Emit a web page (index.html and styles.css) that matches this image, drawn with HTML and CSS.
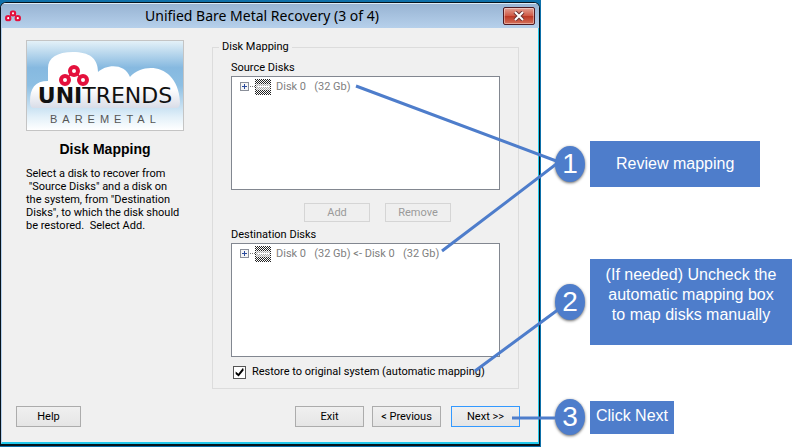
FILE: index.html
```html
<!DOCTYPE html>
<html lang="en">
<head>
    <meta charset="UTF-8">
    <meta name="viewport" content="width=device-width, initial-scale=1.0">
    <title>Unified Bare Metal Recovery</title>
    <link rel="stylesheet" href="styles.css">
</head>
<body>

    <!-- shared shapes -->
    <svg class="defs" width="0" height="0" aria-hidden="true">
        <defs>
            <symbol id="rings" viewBox="0 0 30 22">
                <g fill="#fff" stroke="#e4103c" stroke-width="4">
                    <circle cx="6" cy="15" r="4"/>
                    <circle cx="24" cy="15" r="4"/>
                    <circle cx="15" cy="6" r="4"/>
                </g>
                <path d="M10 11l2-2M18 9l2 2" stroke="#e4103c" stroke-width="2"/>
            </symbol>
            <pattern id="dither" width="2" height="2" patternUnits="userSpaceOnUse">
                <path d="M0 0h1v1H0zM1 1h1v1H1z" fill="#222"/>
            </pattern>
            <pattern id="dither-light" width="2" height="2" patternUnits="userSpaceOnUse">
                <path d="M0 0h1v1H0zM1 1h1v1H1z" fill="#aaa"/>
            </pattern>
            <symbol id="disk" viewBox="0 0 32 16">
                <g shape-rendering="crispEdges">
                    <rect x="1" y="3" width="8" height="8" fill="#f4f4f4" stroke="none"/>
                    <path d="M1 3h9v1H1zM1 11h9v1H1zM1 3h1v9H1zM9 3h1v9H9z" fill="#8a8f99"/>
                    <path d="M3 7h5v1H3zM5 5h1v5H5z" fill="#2a4a9c"/>
                    <path d="M11 7h1v1h-1zM13 7h1v1h-1zM15 7h1v1h-1z" fill="#777"/>
                    <rect x="16" y="0" width="16" height="16" fill="url(#dither)"/>
                    <rect x="17" y="5" width="14" height="6" fill="#f6f6f6"/>
                    <rect x="17" y="5" width="14" height="6" fill="url(#dither-light)"/>
                    <path d="M18 7h12v1H18z" fill="#fff"/>
                </g>
            </symbol>
        </defs>
    </svg>

    <div class="page">
        <div class="desktop">
            <div class="window">
                <div class="titlebar">
                    <svg class="app-icon" viewBox="0 0 30 22" aria-hidden="true"><use href="#rings"/></svg>
                    <h1>Unified Bare Metal Recovery (3 of 4)</h1>
                    <button class="close" type="button" aria-label="Close">
                        <svg width="12" height="10" viewBox="0 0 12 10" aria-hidden="true">
                            <path d="M2 1l8 8M10 1L2 9" stroke="#6b3436" stroke-width="4"/>
                            <path d="M2 1l8 8M10 1L2 9" stroke="#fff" stroke-width="2"/>
                        </svg>
                    </button>
                </div>

                <form class="content">
                    <div class="columns">
                        <div class="side">
                            <svg class="logo" viewBox="0 0 156 89" role="img" aria-label="Unitrends Baremetal">
                                <defs>
                                    <linearGradient id="sky" x1="0" y1="0" x2="0" y2="1">
                                        <stop offset="0" stop-color="#e4f1f8"/>
                                        <stop offset=".3" stop-color="#86b9e0"/>
                                        <stop offset=".5" stop-color="#8dbfe3"/>
                                        <stop offset=".85" stop-color="#e2f0f9"/>
                                        <stop offset="1" stop-color="#fff"/>
                                    </linearGradient>
                                    <linearGradient id="cloud" x1="0" y1="0" x2="0" y2="1">
                                        <stop offset=".65" stop-color="#fff"/>
                                        <stop offset="1" stop-color="#d9dde8"/>
                                    </linearGradient>
                                </defs>
                                <rect width="156" height="89" fill="url(#sky)"/>
                                <path d="M7 67Q3 67 3 61C3 47 8 40 21 40V27C21 17 30 11 46 11C62 11 71 17 71 31C79 23 98 22 103 36C118 20 151 24 153 61Q153 67 149 67Z" fill="url(#cloud)"/>
                                <use href="#rings" x="32" y="24" width="30" height="22"/>
                                <text class="brand" x="78" y="62" text-anchor="middle"><tspan class="brand-bold">UNI</tspan>TRENDS</text>
                                <text class="product" x="23" y="82">BAREMETAL</text>
                            </svg>
                            <h2>Disk Mapping</h2>
                            <p>Select a disk to recover from
 "Source Disks" and a disk on
the system, from "Destination
Disks", to which the disk should
be restored.  Select Add.</p>
                        </div>

                        <fieldset>
                            <legend>Disk Mapping</legend>
                            <h3>Source Disks</h3>
                            <ul class="tree">
                                <li><svg width="32" height="16" aria-hidden="true"><use href="#disk"/></svg>Disk 0   (32 Gb)</li>
                            </ul>
                            <div class="actions">
                                <button type="button" disabled>Add</button>
                                <button type="button" disabled>Remove</button>
                            </div>
                            <h3>Destination Disks</h3>
                            <ul class="tree">
                                <li><svg width="32" height="16" aria-hidden="true"><use href="#disk"/></svg>Disk 0   (32 Gb) &lt;- Disk 0   (32 Gb)</li>
                            </ul>
                            <label class="check" for="automatic">
                                <input type="checkbox" id="automatic" checked>
                                Restore to original system (automatic mapping)
                            </label>
                        </fieldset>
                    </div>

                    <div class="footer">
                        <button class="help" type="button">Help</button>
                        <button type="button">Exit</button>
                        <button type="button">&lt; Previous</button>
                        <button class="next" type="button">Next &gt;&gt;</button>
                    </div>
                </form>
            </div>
        </div>

        <ol class="steps">
            <li class="step-review"><span class="number">1</span><span class="note">Review mapping</span></li>
            <li class="step-uncheck"><span class="number">2</span><span class="note">(If needed) Uncheck the<br>automatic mapping box<br>to map disks manually</span></li>
            <li class="step-next"><span class="number">3</span><span class="note">Click Next</span></li>
        </ol>

        <svg class="pointers" viewBox="0 0 797 447" preserveAspectRatio="none" aria-hidden="true">
            <path d="M356 86L559 162L442 251M475 371L559 309M512 418H555"/>
        </svg>
    </div>

</body>
</html>
```

FILE: styles.css
```css
* {
    box-sizing: border-box;
}

body {
    margin: 0;
    background-color: #fff;
    color: #000;
    font-family: "Liberation Sans", Arial, sans-serif;
    font-size: 12px;
}

h1, h2, h3, p, ul, ol {
    margin: 0;
    padding: 0;
    font-weight: normal;
}

ul, ol {
    list-style: none;
}

.defs {
    position: absolute;
}

.page {
    position: relative;
    display: grid;
    grid-template-columns: 541fr 256fr;
}

/* dialog window */
.desktop {
    padding: 2px 1px 1px 0;
    background-color: #0e70a9;
}

.window {
    border: 1px solid #06131c;
    border-bottom-width: 2px;
    border-radius: 6px 6px 0 0;
    background-color: #f0f0f0;
    overflow: hidden;
}

.titlebar {
    display: flex;
    align-items: center;
    height: 25px;
    padding: 0 4px;
    border-top: 1px solid #dcebf6;
    background: linear-gradient(#98b4d3, #b6d0eb);
}

.app-icon {
    width: 16px;
    height: 12px;
}

.titlebar h1 {
    flex: 1;
    font-family: "Noto Sans", "Open Sans", sans-serif;
    font-size: 14px;
    line-height: 20px;
    text-align: center;
}

.close {
    display: flex;
    align-items: center;
    justify-content: center;
    width: 32px;
    height: 18px;
    padding: 0;
    border: 1px solid #4e1a22;
    border-radius: 2px;
    background: linear-gradient(#e3a093, #cf5a47 48%, #bb3623 50%, #d4705a);
    box-shadow: inset 0 0 0 1px rgba(255, 255, 255, 0.4);
}

.content {
    padding: 12px 18px 15px 14px;
    border: solid #22c8ec;
    border-width: 0 1px 2px 1px;
    border-left-color: #b4d0ee;
    font-family: Roboto, "Liberation Sans", sans-serif;
    font-size: 11px;
}

.columns {
    display: grid;
    grid-template-columns: 158px 1fr;
    gap: 28px;
    padding: 0 1px 0 10px;
}

.logo {
    display: block;
    width: 100%;
    border: 1px solid #c4c4c4;
}

.brand {
    font-family: "DejaVu Sans", sans-serif;
    font-size: 22px;
    fill: #111;
}

.brand-bold {
    font-weight: bold;
}

.product {
    font-family: "Liberation Sans", sans-serif;
    font-size: 11px;
    letter-spacing: 5px;
    fill: #555;
}

.side h2 {
    margin: 10px 0;
    font-family: "Liberation Sans", sans-serif;
    font-size: 14px;
    font-weight: bold;
    line-height: 16px;
    text-align: center;
}

.side p {
    line-height: 13px;
    white-space: pre;
}

fieldset {
    min-width: 0;
    margin: 0;
    padding: 6px 18px 9px;
    border: 1px solid #dcdcdc;
}

legend {
    margin-left: -12px;
    padding: 0 3px;
    line-height: 14px;
}

fieldset h3 {
    font-size: 11px;
    line-height: 16px;
}

.tree {
    height: 114px;
    padding: 1px 7px;
    border: 1px solid #828790;
    background-color: #fff;
    color: #808080;
}

.tree li {
    display: flex;
    align-items: center;
    gap: 5px;
    line-height: 18px;
    white-space: pre;
}

.actions {
    display: flex;
    justify-content: center;
    gap: 15px;
    padding: 13px 0 5px 24px;
}

button {
    font-family: inherit;
    font-size: 11px;
}

.actions button {
    width: 66px;
    height: 19px;
    padding: 0;
    border: 1px solid #d5d5d5;
    background-color: #efefef;
    color: #9a9a9a;
}

.check {
    display: flex;
    align-items: center;
    gap: 6px;
    padding: 8px 2px 0;
    line-height: 14px;
}

.check input {
    appearance: none;
    width: 13px;
    height: 13px;
    margin: 0;
    border: 1px solid #555;
    background-color: #fff;
}

.check input:checked::before {
    content: "";
    display: block;
    height: 11px;
    background-color: #000;
    clip-path: polygon(15% 45%, 40% 65%, 82% 12%, 88% 35%, 42% 92%, 15% 68%);
}

.footer {
    display: flex;
    gap: 8px;
    padding-top: 17px;
}

.footer button {
    width: 69px;
    height: 21px;
    padding: 0;
    border: 1px solid #acacac;
    background: linear-gradient(#f0f0f0, #e5e5e5);
}

.footer .help {
    width: 65px;
    margin-right: auto;
}

.footer .next {
    margin-left: 2px;
    border-color: #3399ff;
}

/* numbered notes */
.steps {
    padding: 141px 5px 12px 14px;
    color: #fff;
}

.steps li {
    display: flex;
    align-items: center;
    gap: 5px;
}

.number {
    flex: none;
    width: 30px;
    height: 36px;
    border-radius: 50%;
    background-color: #4e7dcb;
    box-shadow: 0 1px 3px rgba(0, 0, 0, 0.6);
    font-size: 28px;
    line-height: 36px;
    text-align: center;
}

.note {
    background-color: #4e7dcb;
    font-size: 16px;
    line-height: 20px;
    text-align: center;
}

.step-review .note {
    padding: 13px 26px;
}

.step-uncheck {
    margin: 72px 0 54px;
}

.step-uncheck .note {
    flex: 1;
    padding: 6px 6px 20px;
}

.step-next .note {
    padding: 5px 6px 8px;
}

/* lines from the notes to the controls */
.pointers {
    position: absolute;
    inset: 0;
    width: 100%;
    height: 100%;
    pointer-events: none;
}

.pointers path {
    fill: none;
    stroke: #4e7dcb;
    stroke-width: 3;
}
```
